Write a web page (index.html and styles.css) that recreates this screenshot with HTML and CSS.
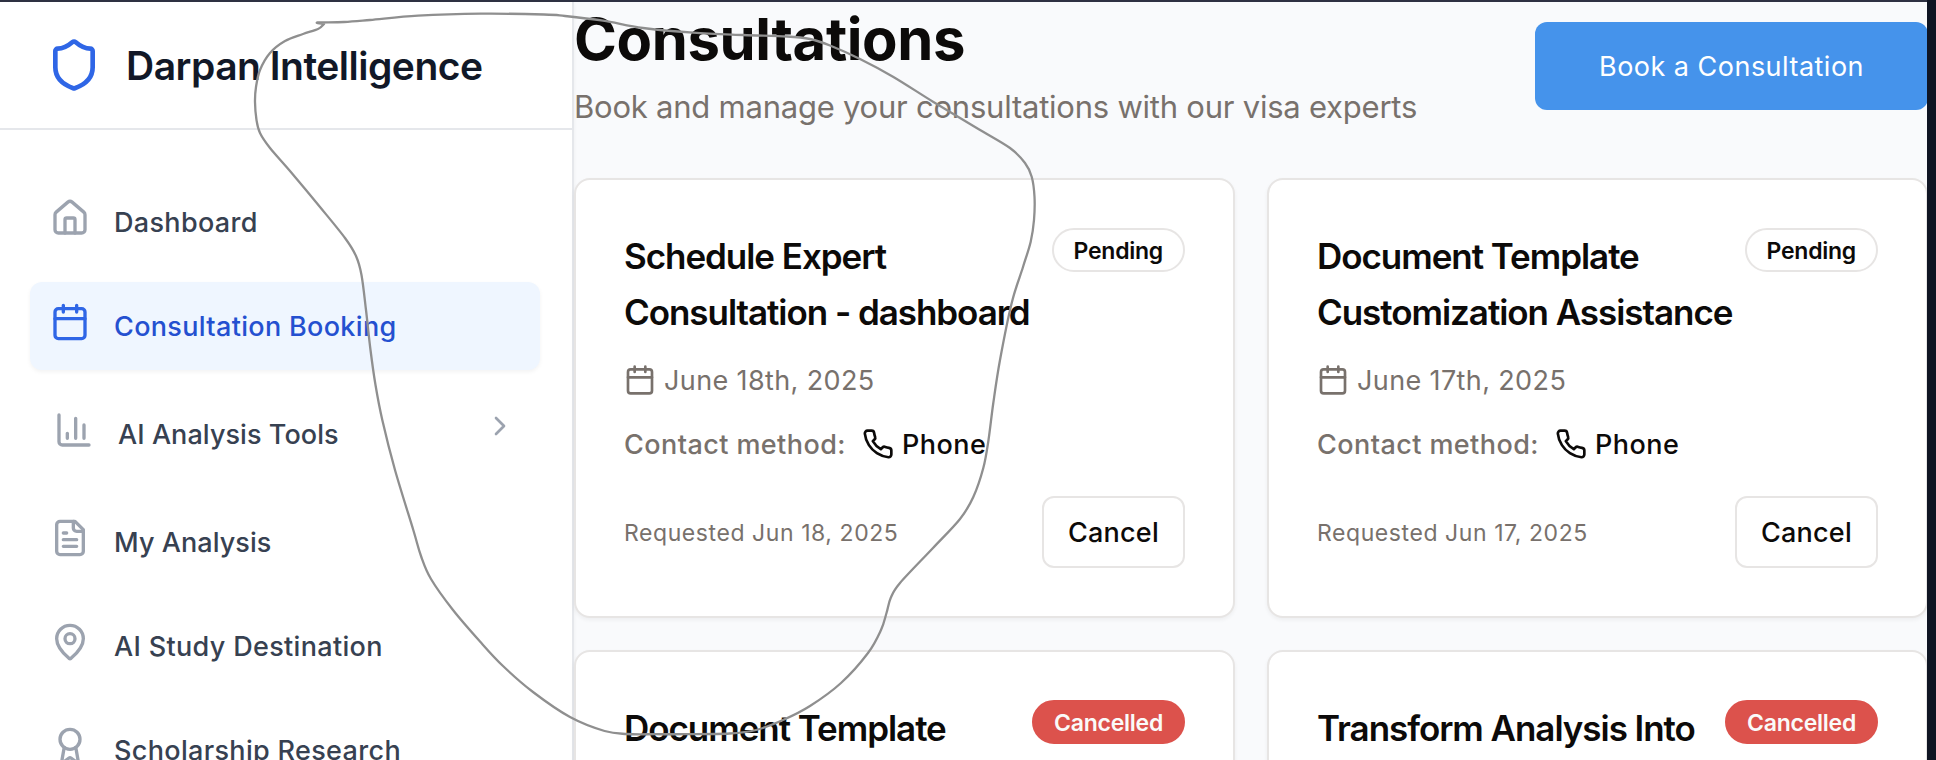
FILE: index.html
```
<!DOCTYPE html>
<html lang="en">
<head>
<meta charset="utf-8">
<title>Consultations - Darpan Intelligence</title>
<link rel="stylesheet" href="styles.css">
</head>
<body>
<svg class="sprite" aria-hidden="true">
  <symbol id="calendar" viewBox="0 0 24 24"><path d="M8 2v4M16 2v4M3 10h18"/><rect x="3" y="4" width="18" height="18" rx="2"/></symbol>
  <symbol id="phone" viewBox="0 0 24 24"><path d="M22 16.92v3a2 2 0 0 1-2.18 2 19.79 19.79 0 0 1-8.63-3.07 19.5 19.5 0 0 1-6-6 19.79 19.79 0 0 1-3.07-8.67A2 2 0 0 1 4.11 2h3a2 2 0 0 1 2 1.72 12.84 12.84 0 0 0 .7 2.81 2 2 0 0 1-.45 2.11L8.09 9.91a16 16 0 0 0 6 6l1.27-1.27a2 2 0 0 1 2.11-.45 12.84 12.84 0 0 0 2.81.7A2 2 0 0 1 22 16.92z"/></symbol>
</svg>
<div class="window">
  <aside class="sidebar">
    <div class="brand">
      <svg class="icon brand-icon" viewBox="0 0 24 24"><path d="M20 13c0 5-3.5 7.5-7.66 8.95a1 1 0 0 1-.67-.01C7.5 20.5 4 18 4 13V6a1 1 0 0 1 1-1c2 0 4.5-1.2 6.24-2.72a1.17 1.17 0 0 1 1.52 0C14.51 3.81 17 5 19 5a1 1 0 0 1 1 1z"/></svg>
      <span class="brand-name">Darpan Intelligence</span>
    </div>
    <nav class="nav">
      <a class="nav-item">
        <svg class="icon nav-icon" viewBox="0 0 24 24"><path d="M15 21v-8a1 1 0 0 0-1-1h-4a1 1 0 0 0-1 1v8"/><path d="M3 10a2 2 0 0 1 .709-1.528l7-5.999a2 2 0 0 1 2.582 0l7 5.999A2 2 0 0 1 21 10v9a2 2 0 0 1-2 2H5a2 2 0 0 1-2-2z"/></svg>
        <span class="nav-label">Dashboard</span>
      </a>
      <a class="nav-item nav-item--active">
        <svg class="icon nav-icon"><use href="#calendar"/></svg>
        <span class="nav-label">Consultation Booking</span>
      </a>
      <a class="nav-item nav-item--group">
        <svg class="icon nav-icon" viewBox="0 0 24 24"><path d="M3 3v16a2 2 0 0 0 2 2h16M18 17V9M13 17V5M8 17v-3"/></svg>
        <span class="nav-label nav-label--tight">AI Analysis Tools</span>
        <svg class="icon chevron" viewBox="0 0 24 24"><path d="m9 18 6-6-6-6"/></svg>
      </a>
      <a class="nav-item">
        <svg class="icon nav-icon" viewBox="0 0 24 24"><path d="M15 2H6a2 2 0 0 0-2 2v16a2 2 0 0 0 2 2h12a2 2 0 0 0 2-2V7Z"/><path d="M14 2v4a2 2 0 0 0 2 2h4M10 9H8M16 13H8M16 17H8"/></svg>
        <span class="nav-label nav-label--tight">My Analysis</span>
      </a>
      <a class="nav-item">
        <svg class="icon nav-icon" viewBox="0 0 24 24"><path d="M20 10c0 4.993-5.539 10.193-7.399 11.799a1 1 0 0 1-1.202 0C9.539 20.193 4 14.993 4 10a8 8 0 0 1 16 0"/><circle cx="12" cy="10" r="3"/></svg>
        <span class="nav-label">AI Study Destination</span>
      </a>
      <a class="nav-item">
        <svg class="icon nav-icon" viewBox="0 0 24 24"><path d="m15.477 12.89 1.515 8.526a.5.5 0 0 1-.81.47l-3.58-2.687a1 1 0 0 0-1.197 0l-3.586 2.686a.5.5 0 0 1-.81-.469l1.514-8.526"/><circle cx="12" cy="8" r="6"/></svg>
        <span class="nav-label">Scholarship Research</span>
      </a>
    </nav>
  </aside>
  <main class="main">
    <header class="page-head">
      <div>
        <h1 class="page-title">Consultations</h1>
        <p class="page-sub">Book and manage your consultations with our visa experts</p>
      </div>
      <button class="book">Book a Consultation</button>
    </header>
    <section class="grid">
      <article class="card">
        <div class="card-head"><h2 class="card-title">Schedule Expert Consultation - dashboard</h2><span class="badge">Pending</span></div>
        <div class="date"><svg class="icon small-icon"><use href="#calendar"/></svg><span class="text">June 18th, 2025</span></div>
        <div class="contact"><span class="contact-label text">Contact method:</span><span class="contact-value"><svg class="icon small-icon"><use href="#phone"/></svg><span class="text">Phone</span></span></div>
        <div class="card-foot"><span class="requested">Requested Jun 18, 2025</span><button class="cancel">Cancel</button></div>
      </article>
      <article class="card">
        <div class="card-head"><h2 class="card-title">Document Template Customization Assistance</h2><span class="badge">Pending</span></div>
        <div class="date"><svg class="icon small-icon"><use href="#calendar"/></svg><span class="text">June 17th, 2025</span></div>
        <div class="contact"><span class="contact-label text">Contact method:</span><span class="contact-value"><svg class="icon small-icon"><use href="#phone"/></svg><span class="text">Phone</span></span></div>
        <div class="card-foot"><span class="requested">Requested Jun 17, 2025</span><button class="cancel">Cancel</button></div>
      </article>
      <article class="card">
        <div class="card-head"><h2 class="card-title">Document Template</h2><span class="badge badge--cancelled">Cancelled</span></div>
      </article>
      <article class="card">
        <div class="card-head"><h2 class="card-title">Transform Analysis Into</h2><span class="badge badge--cancelled">Cancelled</span></div>
      </article>
    </section>
  </main>
</div>
<svg class="scribble" viewBox="0 0 1936 760"><path id="stroke"/></svg>
<script src="scribble.js"></script>
</body>
</html>
```
FILE: styles.css
```
* { box-sizing: border-box; }
body {
  margin: 0;
  height: 760px;
  overflow: hidden;
  position: relative;
  background: #0f1523;
  font-family: Inter, "Liberation Sans", sans-serif;
}
h1, h2, p { margin: 0; }
button { font-family: inherit; padding: 0; }
.sprite { display: none; }
.icon {
  flex: none;
  fill: none;
  stroke: currentColor;
  stroke-width: 2;
  stroke-linecap: round;
  stroke-linejoin: round;
}

.window {
  display: flex;
  width: 1927px;
  height: 760px;
  overflow: hidden;
  border-top: 2px solid #2e3142;
  background: #f9fafc;
}

/* Sidebar */
.sidebar {
  flex: none;
  width: 574px;
  background: #fff;
  border-right: 2px solid #e5e7eb;
  box-shadow: 0 2px 4px rgba(0, 0, 0, .05);
}
.brand {
  display: flex;
  align-items: center;
  gap: 24px;
  height: 128px;
  padding-left: 46px;
  border-bottom: 2px solid #e5e7eb;
}
.brand-icon { width: 56px; height: 56px; color: #2f66e6; }
.brand-name {
  font-size: 39px;
  font-weight: 600;
  letter-spacing: -.5px;
  color: #111827;
}
.nav {
  display: flex;
  flex-direction: column;
  gap: 16px;
  padding: 48px 32px 0 30px;
}
.nav-item {
  display: flex;
  flex: none;
  align-items: center;
  gap: 24px;
  height: 88px;
  padding: 0 24px 0 20px;
  border-radius: 12px;
  color: #9ca3af;
}
.nav-item--active {
  background: #eff6ff;
  box-shadow: 0 2px 4px rgba(0, 0, 0, .05);
  color: #2f66e6;
}
.nav-item--group { height: 96px; padding-left: 24px; }
.nav-icon { width: 40px; height: 40px; margin-bottom: 8px; }
.nav-label {
  padding-top: 2px;
  font-size: 27px;
  font-weight: 500;
  line-height: 40px;
  letter-spacing: .33px;
  white-space: nowrap;
  color: #374151;
}
.nav-label--tight { letter-spacing: .07px; }
.nav-item--active .nav-label { color: #2450d0; }
.chevron { width: 32px; height: 32px; margin: 0 0 16px auto; }

/* Page */
.main { flex: none; width: 1354px; }
.page-head {
  display: flex;
  align-items: center;
  justify-content: space-between;
  height: 128px;
}
.page-title {
  font-size: 58px;
  font-weight: 700;
  line-height: 74px;
  letter-spacing: -.38px;
  color: #0c0a09;
}
.page-sub {
  margin-top: 6px;
  font-size: 31px;
  line-height: 50px;
  height: 48px;
  letter-spacing: -.23px;
  color: #78716c;
}
.book {
  width: 393px;
  height: 88px;
  border: 0;
  border-radius: 12px;
  background: #4593eb;
  color: #fff;
  font-size: 27px;
  letter-spacing: .48px;
}
.grid {
  display: grid;
  grid-template-columns: repeat(2, minmax(0, 1fr));
  grid-auto-rows: 440px;
  gap: 32px;
  margin-top: 48px;
}
.card {
  display: flex;
  flex-direction: column;
  padding: 48px;
  border: 2px solid #e7e5e4;
  border-radius: 16px;
  background: #fff;
  box-shadow: 0 2px 4px rgba(0, 0, 0, .05);
}
.card-head {
  display: flex;
  align-items: flex-start;
  justify-content: space-between;
}
.card-title {
  flex: 1;
  font-size: 35px;
  font-weight: 600;
  line-height: 56px;
  letter-spacing: -1.05px;
  color: #0c0a09;
}
.badge {
  flex: none;
  padding: 1px 20px 0;
  height: 44px;
  border: 2px solid #e7e5e4;
  border-radius: 22px;
  font-size: 23px;
  font-weight: 600;
  line-height: 40px;
  letter-spacing: -.25px;
  color: #0c0a09;
}
.badge--cancelled {
  border-color: #dc524c;
  background: #dc524c;
  color: #fafaf9;
}
.date, .contact, .contact-value {
  display: flex;
  align-items: center;
  height: 40px;
  line-height: 40px;
  font-size: 27px;
}
.text { padding-top: 2px; }
.small-icon { width: 32px; height: 32px; margin-right: 8px; }
.date { margin-top: 20px; letter-spacing: .38px; color: #78716c; }
.contact { gap: 16px; margin-top: 24px; font-weight: 500; color: #0c0a09; }
.contact-label { letter-spacing: .43px; color: #78716c; }
.contact-value { letter-spacing: .5px; }
.card-foot {
  display: flex;
  align-items: center;
  justify-content: space-between;
  margin-top: 32px;
}
.requested { padding-top: 2px; font-size: 23px; letter-spacing: .57px; color: #78716c; }
.cancel {
  width: 143px;
  height: 72px;
  border: 2px solid #e7e5e4;
  border-radius: 12px;
  background: #fff;
  font-size: 27px;
  font-weight: 500;
  letter-spacing: .2px;
  color: #0c0a09;
}

/* Freehand annotation over the page */
.scribble {
  position: absolute;
  inset: 0;
  width: 1936px;
  height: 760px;
  fill: none;
  stroke: #8f8f8f;
  stroke-width: 2.3;
  stroke-linecap: round;
  stroke-linejoin: round;
  pointer-events: none;
}
```
FILE: scribble.js
```
// Draws the freehand stroke as a smooth curve through its sampled points.
const points = [
  [324, 24], [318, 29], [303, 34], [285, 41], [270, 53], [260, 70], [256, 87], [255, 102],
  [256.5, 120], [260, 133], [270, 148], [290, 171], [320, 207], [345, 238], [356, 256],
  [361.5, 275], [366, 310], [370.5, 350], [375.5, 385], [382.3, 420],
  [395, 470], [413.3, 530], [421, 556], [431, 579], [453, 610], [480, 641.5],
  [503, 666], [533, 692], [570, 717], [604.6, 731], [627, 734], [656, 734.2], [685, 734.2],
  [729.6, 733.5], [756, 730], [783, 720], [810, 706], [841, 683], [868, 653], [881, 630],
  [886.5, 613], [890.7, 598], [900, 583], [933, 548], [960, 519],
  [973.3, 497], [983.3, 468], [988.5, 440], [993.3, 403], [1000, 360],
  [1011.7, 303], [1023, 267], [1030.7, 241.7], [1034, 220], [1034.5, 196.7],
  [1031.7, 176.7], [1025, 163], [1010, 148], [976.7, 128], [933, 101.7], [893, 76.7],
  [860, 59], [830, 45.5], [810, 39], [786.7, 36.5], [743, 35], [693, 32.7], [643, 28],
  [603, 20.7], [565, 16], [544, 14.5], [481, 13.7], [418, 15.7], [370, 20], [344, 22],
  [317.5, 22.5], [324, 24]
];
let d = `M${points[0]}`;
for (let i = 0; i < points.length - 1; i++) {
  const a = points[i - 1] || points[i];
  const b = points[i];
  const c = points[i + 1];
  const e = points[i + 2] || c;
  d += `C${b[0] + (c[0] - a[0]) / 6},${b[1] + (c[1] - a[1]) / 6} ` +
       `${c[0] - (e[0] - b[0]) / 6},${c[1] - (e[1] - b[1]) / 6} ${c}`;
}
document.getElementById('stroke').setAttribute('d', d);
```
